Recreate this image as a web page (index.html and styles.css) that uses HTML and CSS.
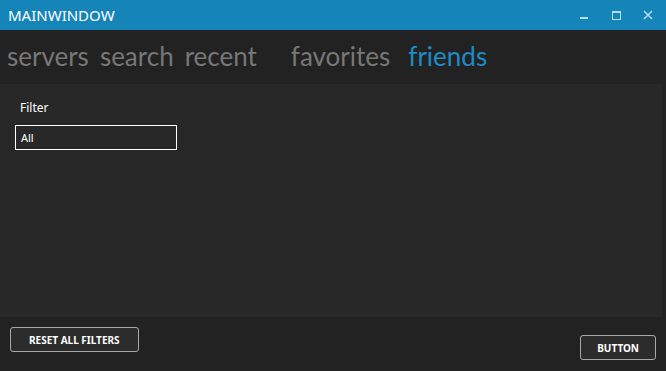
FILE: index.html
```html
<!DOCTYPE html>
<html lang="en">
<head>
  <meta charset="utf-8">
  <title>MainWindow</title>
  <link rel="stylesheet" href="styles.css">
</head>
<body>
  <header class="titlebar">
    <span class="title">MAINWINDOW</span>
    <div class="window-buttons">
      <span class="wbtn"><svg width="10" height="10" viewBox="0 0 10 10"><rect x="1" y="7" width="8" height="2" fill="currentColor"/></svg></span>
      <span class="wbtn"><svg width="10" height="10" viewBox="0 0 10 10"><rect x="1.5" y="1.5" width="8" height="8" fill="none" stroke="currentColor"/><rect x="1" y="1" width="9" height="2" fill="currentColor"/></svg></span>
      <span class="wbtn"><svg width="10" height="10" viewBox="0 0 10 10"><path d="M1 1 L9 9 M9 1 L1 9" stroke="currentColor" stroke-width="1.5"/></svg></span>
    </div>
  </header>

  <nav class="tabs">
    <span class="tab">servers</span>
    <span class="tab">search</span>
    <span class="tab">recent</span>
    <span class="tab spaced">favorites</span>
    <span class="tab active">friends</span>
  </nav>

  <div class="panel">
    <label class="filter-label">Filter</label>
    <div class="filter-box">All</div>
  </div>

  <footer class="bottom">
    <button class="btn">RESET ALL FILTERS</button>
    <button class="btn btn-low">BUTTON</button>
  </footer>
</body>
</html>
```

FILE: styles.css
```css
body {
  margin: 0;
  width: 666px;
  height: 371px;
  overflow: hidden;
  background: #222222;
  font-family: "Noto Sans", "Open Sans", sans-serif;
  color: #ffffff;
}

.titlebar {
  height: 30px;
  background: #1584b9;
  display: flex;
  align-items: center;
  justify-content: space-between;
}

.title {
  padding-left: 8px;
  font-size: 15px;
  color: #ffffff;
}

.window-buttons {
  display: flex;
  gap: 22px;
  padding-right: 13px;
  color: #b6dcf0;
}

.wbtn {
  display: flex;
  width: 10px;
  height: 10px;
}

.tabs {
  display: flex;
  gap: 11px;
  padding: 9px 0 0 7px;
  height: 46px;
  box-sizing: border-box;
  font-family: Lato, "Noto Sans", sans-serif;
  font-size: 26px;
  line-height: 34px;
  color: #777777;
  white-space: nowrap;
}

.tab.spaced {
  margin-left: 23px;
}

.tab.active {
  margin-left: 7px;
  color: #1e8bc6;
}

.panel {
  margin-top: 8px;
  margin-right: 4px;
  height: 233px;
  background: #282828;
  padding: 16px 0 0 15px;
  box-sizing: border-box;
}

.filter-label {
  display: block;
  padding-left: 5px;
  font-size: 12px;
  line-height: 16px;
}

.filter-box {
  margin-top: 9px;
  height: 23px;
  border: 1px solid #ffffff;
  padding-left: 5px;
  font-size: 11px;
  line-height: 23px;
  width: 155px;
}

.bottom {
  display: flex;
  justify-content: space-between;
  align-items: flex-start;
  padding: 10px 10px 0 10px;
}

.btn {
  background: #2c2c2c;
  border: 1px solid #a8a8a8;
  border-radius: 3px;
  color: #ffffff;
  font-family: "Noto Sans", sans-serif;
  font-weight: bold;
  font-size: 10px;
  height: 25px;
  padding: 0 18px;
}

.btn-low {
  margin-top: 8px;
  padding: 0 16px;
}
```
